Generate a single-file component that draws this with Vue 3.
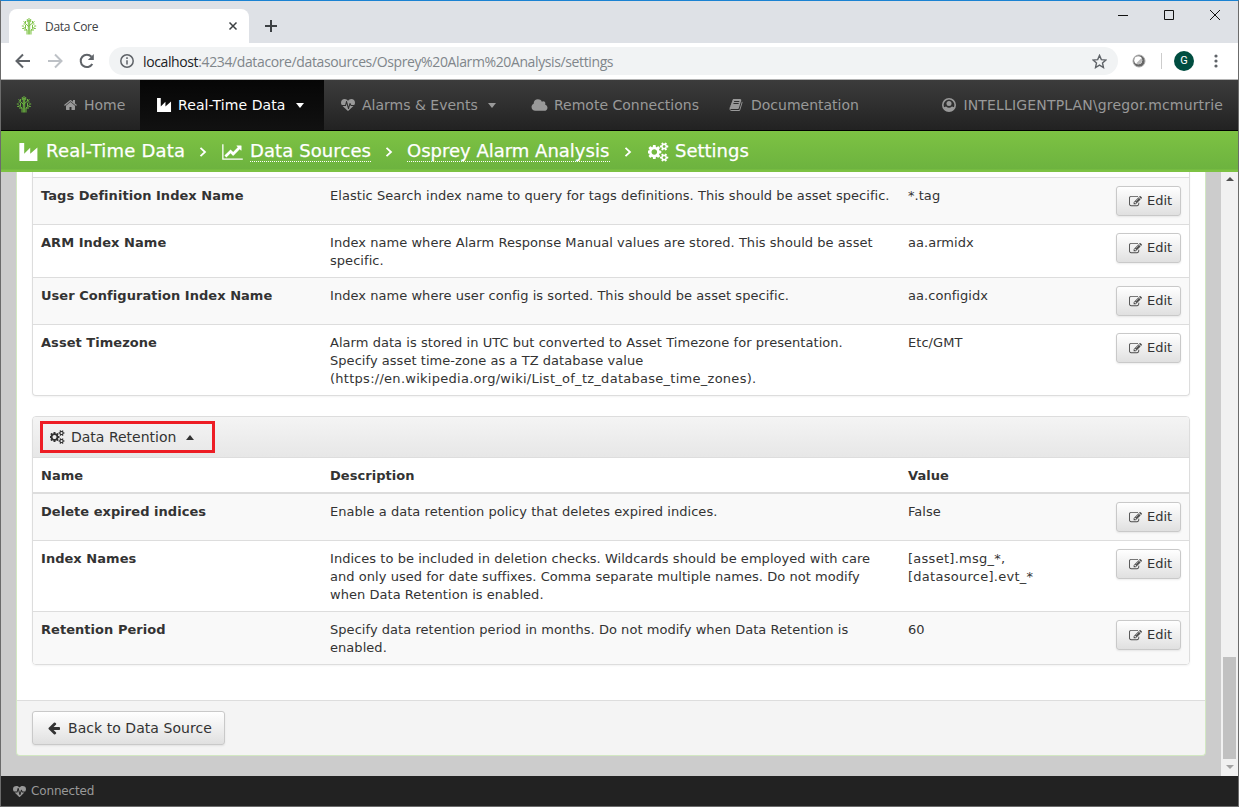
<script setup>
const icons = {
  home: { box: '0 0 1792 1792', d: 'M1408 992v480q0 26-19 45t-45 19h-384v-384h-256v384h-384q-26 0-45-19t-19-45v-480q0-1 .5-3t.5-3l575-474 575 474q1 2 1 6zm223-69l-62 74q-8 9-21 11h-3q-13 0-21-7l-692-577-692 577q-12 8-24 7-13-2-21-11l-62-74q-8-10-7-23.5t11-21.5l719-599q32-26 76-26t76 26l244 204v-195q0-14 9-23t23-9h192q14 0 23 9t9 23v408l219 182q10 8 11 21.5t-7 23.5z' },
  plant: { box: '0 0 16 15', d: 'M0 0h4v9l5-5v5l6-5.2V15H0z' },
  heart: { box: '0 0 1792 1792', d: 'M1280 1024h305q-5 6-10 10.5t-9 7.5l-3 4-623 600q-18 18-44 18t-44-18l-624-602q-5-2-21-20h369q22 0 39.5-13.5t22.5-34.5l70-281 190 667q6 20 23 33t39 13q21 0 38-13t23-33l146-485 56 112q18 35 57 35zm512-428q0 145-103 300h-369l-111-221q-8-17-25.5-27t-36.5-8q-45 5-56 46l-129 430-196-686q-6-20-23.5-33t-39.5-13-39 13.5-22 34.5l-116 464h-423q-103-155-103-300 0-220 127-344t351-124q62 0 126.5 21.5t120 58 95.5 68.5 76 68q36-36 76-68t95.5-68.5 120-58 126.5-21.5q224 0 351 124t127 344z' },
  cloud: { box: '0 0 2048 1792', d: 'M1984 1152q0 159-112.5 271.5t-271.5 112.5h-1088q-185 0-316.5-131.5t-131.5-316.5q0-132 71-241.5t187-163.5q-2-28-2-43 0-212 150-362t362-150q158 0 286.5 88t187.5 230q70-62 166-62 106 0 181 75t75 181q0 75-41 138 129 30 213 134.5t84 239.5z' },
  book: { box: '0 0 1792 1792', d: 'M1703 478q40 57 18 129l-275 906q-19 64-76.5 107.5t-122.5 43.5h-923q-77 0-148.5-53.5t-99.5-131.5q-24-67-2-127 0-4 3-27t4-37q1-8-3-21.5t-3-19.5q2-11 8-21t16.5-23.5 16.5-23.5q23-38 45-91.5t30-91.5q3-10 .5-30t-.5-28q3-11 17-28t17-23q21-36 42-92t25-90q1-9-2.5-32t.5-28q4-13 22-30.5t22-22.5q19-26 42.5-84.5t27.5-96.5q1-8-3-25.5t-2-26.5q2-8 9-18t18-23 17-21q8-12 16.5-30.5t15-35 16-36 19.5-32 26.5-23.5 36-11.5 47.5 5.5l-1 3q38-9 51-9h761q74 0 114 56t18 130l-274 906q-36 119-71.5 153.5t-128.5 34.5h-869q-27 0-38 15-11 16-1 43 24 70 144 70h923q29 0 56-15.5t35-41.5l300-987q7-22 5-57 38 15 59 43zm-1064 2q-4 13 2 22.5t20 9.5h608q13 0 25.5-9.5t16.5-22.5l21-64q4-13-2-22.5t-20-9.5h-608q-13 0-25.5 9.5t-16.5 22.5zm-83 256q-4 13 2 22.5t20 9.5h608q13 0 25.5-9.5t16.5-22.5l21-64q4-13-2-22.5t-20-9.5h-608q-13 0-25.5 9.5t-16.5 22.5z' },
  chart: { box: '0 0 2048 1792', d: 'M2048 1536v128h-2048v-1536h128v1408h1920zm-128-1248v435q0 21-19.5 29.5t-35.5-7.5l-121-121-633 633q-10 10-23 10t-23-10l-233-233-416 416-192-192 585-585q10-10 23-10t23 10l233 233 464-464-121-121q-16-16-7.5-35.5t29.5-19.5h435q14 0 23 9t9 23z' },
  cogs: { box: '0 0 1920 1792', d: 'M832 896q0-106-75-181t-181-75-181 75-75 181 75 181 181 75 181-75 75-181zm768 512q0-52-38-90t-90-38-90 38-38 90q0 53 37.5 90.5t90.5 37.5 90.5-37.5 37.5-90.5zm0-1024q0-52-38-90t-90-38-90 38-38 90q0 53 37.5 90.5t90.5 37.5 90.5-37.5 37.5-90.5zm-384 421v185q0 10-7 19.5t-16 10.5l-155 24q-11 35-32 76 34 48 90 115 7 11 7 20 0 12-7 19-23 30-82.5 89.5t-78.5 59.5q-11 0-21-7l-115-90q-37 19-77 31-11 108-23 155-7 24-30 24h-186q-11 0-20-7.5t-10-17.5l-23-153q-34-10-75-31l-118 89q-7 7-20 7-11 0-21-8-144-133-144-160 0-9 7-19 10-14 41-53t47-61q-23-44-35-82l-152-24q-10-1-17-9.5t-7-19.5v-185q0-10 7-19.5t16-10.5l155-24q11-35 32-76-34-48-90-115-7-11-7-20 0-12 7-20 22-30 82-89t79-59q11 0 21 7l115 90q34-18 77-32 11-108 23-154 7-24 30-24h186q11 0 20 7.5t10 17.5l23 153q34 10 75 31l118-89q8-7 20-7 11 0 21 8 144 133 144 160 0 8-7 19-12 16-42 54t-45 60q23 48 34 82l152 23q10 2 17 10.5t7 19.5zm640 533v140q0 16-149 31-12 27-30 52 51 113 51 138 0 4-4 7-122 71-124 71-8 0-46-47t-52-68q-20 2-30 2t-30-2q-14 21-52 68t-46 47q-2 0-124-71-4-3-4-7 0-25 51-138-18-25-30-52-149-15-149-31v-140q0-16 149-31 13-29 30-52-51-113-51-138 0-4 4-7 4-2 35-20t59-34 30-16q8 0 46 46.5t52 67.5q20-2 30-2t30 2q51-71 92-112l6-2q4 0 124 70 4 3 4 7 0 25-51 138 17 23 30 52 149 15 149 31zm0-1024v140q0 16-149 31-12 27-30 52 51 113 51 138 0 4-4 7-122 71-124 71-8 0-46-47t-52-68q-20 2-30 2t-30-2q-14 21-52 68t-46 47q-2 0-124-71-4-3-4-7 0-25 51-138-18-25-30-52-149-15-149-31v-140q0-16 149-31 13-29 30-52-51-113-51-138 0-4 4-7 4-2 35-20t59-34 30-16q8 0 46 46.5t52 67.5q20-2 30-2t30 2q51-71 92-112l6-2q4 0 124 70 4 3 4 7 0 25-51 138 17 23 30 52 149 15 149 31z' },
  edit: { box: '0 0 1792 1792', d: 'M888 1184l116-116-152-152-116 116v56h96v96h56zm440-720q-16-16-33 1l-350 350q-17 17-1 33t33-1l350-350q17-17 1-33zm80 594v190q0 119-84.5 203.5t-203.5 84.5h-832q-119 0-203.5-84.5t-84.5-203.5v-832q0-119 84.5-203.5t203.5-84.5h832q63 0 117 25 15 7 18 23 3 17-9 29l-49 49q-14 14-32 8-23-6-45-6h-832q-66 0-113 47t-47 113v832q0 66 47 113t113 47h832q66 0 113-47t47-113v-126q0-13 9-22l64-64q15-15 35-7t20 29zm-96-738l288 288-672 672h-288v-288zm444 132l-92 92-288-288 92-92q28-28 68-28t68 28l152 152q28 28 28 68t-28 68z' },
  back: { box: '0 0 1792 1792', d: 'M1664 896v128q0 53-32.5 90.5t-84.5 37.5h-704l293 294q38 36 38 90t-38 90l-75 76q-37 37-90 37-52 0-91-37l-651-652q-37-37-37-90 0-52 37-91l651-650q38-38 91-38 52 0 90 38l75 74q38 38 38 91t-38 91l-293 293h704q52 0 84.5 37.5t32.5 90.5z' },
}

const nav = [
  { id: 'home', icon: 'home', text: 'Home' },
  { id: 'realtime', icon: 'plant', text: 'Real-Time Data', active: true, caret: true },
  { id: 'alarms', icon: 'heart', text: 'Alarms & Events', caret: true },
  { id: 'remote', icon: 'cloud', text: 'Remote Connections' },
  { id: 'docs', icon: 'book', text: 'Documentation' },
]

const indexRows = [
  { name: 'Tags Definition Index Name', lines: ['Elastic Search index name to query for tags definitions. This should be asset specific.'], value: ['*.tag'] },
  { name: 'ARM Index Name', lines: ['Index name where Alarm Response Manual values are stored. This should be asset', 'specific.'], value: ['aa.armidx'] },
  { name: 'User Configuration Index Name', lines: ['Index name where user config is sorted. This should be asset specific.'], value: ['aa.configidx'] },
  { name: 'Asset Timezone', lines: ['Alarm data is stored in UTC but converted to Asset Timezone for presentation.', 'Specify asset time-zone as a TZ database value', '(https://en.wikipedia.org/wiki/List_of_tz_database_time_zones).'], value: ['Etc/GMT'] },
]

const retentionRows = [
  { name: 'Delete expired indices', lines: ['Enable a data retention policy that deletes expired indices.'], value: ['False'] },
  { name: 'Index Names', lines: ['Indices to be included in deletion checks. Wildcards should be employed with care', 'and only used for date suffixes. Comma separate multiple names. Do not modify', 'when Data Retention is enabled.'], value: ['[asset].msg_*,', '[datasource].evt_*'] },
  { name: 'Retention Period', lines: ['Specify data retention period in months. Do not modify when Data Retention is', 'enabled.'], value: ['60'] },
]

const isCode = (line) => line.includes('_')

const tree = 'M7.300 17.500V3M8.700 17.500V3M6 17.500v-4.500L2.500 10M10 17.500v-4.500l3.500-3M8 10L4.500 6.500V4M8 9l3.500-3V4M6 13H3M10 13h3M4.500 11V8M11.500 11V8M2.500 7h2M13.500 7h-2M6.300 5V2M9.700 5V2M.8 9h2M15.200 9h-2M1.200 11.500h2M14.800 11.500h-2M2.500 4.500L4.500 6M13.500 4.500L11.500 6M8 1v3'
</script>

<template>
  <div class="window">
    <header class="tabs">
      <div class="tab">
        <svg class="favicon" viewBox="0 0 16 18"><path :d="tree" /></svg>
        <span class="tab-title">Data Core</span>
        <svg class="tab-close" viewBox="0 0 8 8"><path d="M.5.5l7 7M7.500.5l-7 7" /></svg>
      </div>
      <svg class="new-tab" viewBox="0 0 12 12"><path d="M6 0v12M0 6h12" /></svg>
      <div class="controls">
        <svg viewBox="0 0 12 12"><path d="M1 6.500h10" /></svg>
        <svg viewBox="0 0 12 12"><path d="M1.500 1.500h9v9h-9z" /></svg>
        <svg viewBox="0 0 12 12"><path d="M1 1l10 10M11 1L1 11" /></svg>
      </div>
    </header>

    <div class="toolbar">
      <svg class="nav-arrow" viewBox="0 0 16 16"><path d="M15 8H2M8 1.500L1.500 8 8 14.500" /></svg>
      <svg class="nav-arrow faded" viewBox="0 0 16 16"><path d="M1 8h13M8 1.500L14.500 8 8 14.500" /></svg>
      <svg class="nav-arrow" viewBox="0 0 16 16"><path d="M13.300 11A6.200 6.200 0 1 1 12.500 3.700" /><path class="solid" d="M14.800 1v6H8.800z" /></svg>
      <div class="omnibox">
        <svg class="info" viewBox="0 0 14 14"><circle cx="7" cy="7" r="6.200" /><path d="M7 6.200v4.300M7 3.300v1.600" /></svg>
        <span class="url"><b>localhost</b>:4234/datacore/datasources/Osprey%20Alarm%20Analysis/settings</span>
        <svg class="star" viewBox="0 0 14 14"><path d="M7 1.300l1.700 3.900 4.300.4-3.200 2.800.9 4.200L7 10.400l-3.700 2.200.9-4.200L1 5.600l4.300-.4z" /></svg>
      </div>
      <svg class="ext" viewBox="0 0 14 14"><circle cx="7" cy="7" r="6" fill="#666" stroke="#aaa" /><circle cx="6.200" cy="6.200" r="4" fill="#fff" /><path d="M9.500 4a4 4 0 0 1-5.500 5.500z" fill="#bbb" /></svg>
      <i class="divider"></i>
      <span class="avatar">G</span>
      <svg class="dots" viewBox="0 0 4 14"><circle cx="2" cy="2" r="1.600" /><circle cx="2" cy="7" r="1.600" /><circle cx="2" cy="12" r="1.600" /></svg>
    </div>

    <nav class="navbar">
      <svg class="brand" viewBox="0 0 16 18"><path :d="tree" /></svg>
      <a v-for="item in nav" :key="item.id" class="nav-item" :class="[item.id, { active: item.active }]">
        <svg class="nav-icon" :viewBox="icons[item.icon].box"><path :d="icons[item.icon].d" /></svg>
        <span class="label">{{ item.text }}</span>
        <i v-if="item.caret" class="caret"></i>
      </a>
      <a class="nav-item user">
        <svg class="nav-icon" viewBox="0 0 14 14"><circle cx="7" cy="7" r="6.200" fill="none" stroke="#999" stroke-width="1.600" /><circle cx="7" cy="5.500" r="2.500" /><path d="M1.500 9.500L4 8.600q3 2.400 6 0l2.500.9L10 13H4z" /></svg>
        <span class="label">INTELLIGENTPLAN\gregor.mcmurtrie</span>
      </a>
    </nav>

    <div class="crumbs">
      <svg class="c-plant" :viewBox="icons.plant.box"><path :d="icons.plant.d" /></svg>
      <span class="crumb c1">Real-Time Data</span>
      <svg class="sep" viewBox="0 0 8 10"><path d="M1.500.8L6 5 1.500 9.200" /></svg>
      <svg class="c-chart" :viewBox="icons.chart.box"><path :d="icons.chart.d" /></svg>
      <span class="crumb c2 link">Data Sources</span>
      <svg class="sep" viewBox="0 0 8 10"><path d="M1.500.8L6 5 1.500 9.200" /></svg>
      <span class="crumb c3 link">Osprey Alarm Analysis</span>
      <svg class="sep" viewBox="0 0 8 10"><path d="M1.500.8L6 5 1.500 9.200" /></svg>
      <svg class="c-cogs" :viewBox="icons.cogs.box"><path :d="icons.cogs.d" /></svg>
      <span class="crumb c4">Settings</span>
    </div>

    <div class="viewport">
      <main class="page">
        <div class="page-body">
          <section class="card continued">
            <div v-for="row in indexRows" :key="row.name" class="row">
              <div class="cell name"><span>{{ row.name }}</span></div>
              <div class="cell"><span v-for="line in row.lines" :key="line" class="line" :class="{ code: isCode(line) }">{{ line }}</span></div>
              <div class="cell"><span v-for="line in row.value" :key="line" class="line" :class="{ code: isCode(line) }">{{ line }}</span></div>
              <button class="btn edit"><svg :viewBox="icons.edit.box"><path :d="icons.edit.d" /></svg>Edit</button>
            </div>
          </section>
          <section class="card retention">
            <div class="card-head">
              <div class="highlight">
                <svg :viewBox="icons.cogs.box"><path :d="icons.cogs.d" /></svg>
                <span>Data Retention</span>
                <i class="caret up"></i>
              </div>
            </div>
            <div class="row head">
              <div class="cell name"><span>Name</span></div>
              <div class="cell name"><span>Description</span></div>
              <div class="cell name"><span>Value</span></div>
            </div>
            <div v-for="row in retentionRows" :key="row.name" class="row">
              <div class="cell name"><span>{{ row.name }}</span></div>
              <div class="cell"><span v-for="line in row.lines" :key="line" class="line" :class="{ code: isCode(line) }">{{ line }}</span></div>
              <div class="cell"><span v-for="line in row.value" :key="line" class="line" :class="{ code: isCode(line) }">{{ line }}</span></div>
              <button class="btn edit"><svg :viewBox="icons.edit.box"><path :d="icons.edit.d" /></svg>Edit</button>
            </div>
          </section>
        </div>
        <footer class="page-foot">
          <button class="btn back"><svg :viewBox="icons.back.box"><path :d="icons.back.d" /></svg>Back to Data Source</button>
        </footer>
      </main>
      <div class="scrollbar">
        <i class="caret up"></i>
        <i class="thumb"></i>
        <i class="caret down"></i>
      </div>
    </div>

    <footer class="status">
      <svg :viewBox="icons.heart.box"><path :d="icons.heart.d" /></svg>
      <span>Connected</span>
    </footer>
  </div>
</template>

<style>
body { margin: 0; overflow: hidden; }
</style>

<style scoped>
* { box-sizing: border-box; }
svg { display: block; flex: none; }
.window {
  width: 1239px; height: 807px; display: flex; flex-direction: column;
  border: 1px solid #6b6b6b; border-top-color: #1a82d2; background: #fff;
  font: 13px/18px Verdana, "DejaVu Sans", sans-serif; color: #333; overflow: hidden; white-space: nowrap;
}
.tabs { height: 42px; flex: none; display: flex; background: #dee1e6; padding: 8px 0 0 8px; }
.tab { width: 240px; height: 34px; display: flex; align-items: center; background: #fff; border-radius: 8px 8px 0 0; padding: 0 12px; }
.favicon, .brand { width: 16px; height: 18px; fill: none; stroke: #7cc243; stroke-width: 1; }
.tab-title { margin-left: 8px; font: 12px "Open Sans", sans-serif; letter-spacing: -.3px; color: #3c4043; flex: 1; }
.tab-close { width: 8px; height: 8px; fill: none; stroke: #3c4043; stroke-width: 1.5; margin-right: 0; overflow: visible; }
.new-tab { width: 12px; height: 12px; margin: 11px 0 0 16px; fill: none; stroke: #3c4043; stroke-width: 2; }
.controls { margin-left: auto; display: flex; gap: 34px; padding-right: 17px; }
.controls svg { width: 12px; height: 12px; fill: none; stroke: #111; stroke-width: 1; }
.toolbar { height: 37px; flex: none; display: flex; align-items: center; background: #fff; border-bottom: 1px solid #b4b4b4; padding: 0 20px 0 14px; }
.nav-arrow { width: 16px; height: 16px; margin-right: 16px; fill: none; stroke: #5f6368; stroke-width: 2; }
.nav-arrow.faded { stroke: #bdc1c6; }
.nav-arrow .solid { fill: #5f6368; stroke: none; }
.omnibox { width: 1009px; height: 28px; margin-left: -2px; display: flex; align-items: center; background: #f1f3f4; border-radius: 14px; padding: 0 11px 0 11px; }
.info { width: 14px; height: 14px; fill: none; stroke: #5f6368; stroke-width: 1.5; }
.url { margin-left: 9px; font: 14px "Open Sans", sans-serif; letter-spacing: -.38px; color: #80868b; flex: 1; }
.url b { font-weight: 400; color: #202124; }
.star { width: 15px; height: 15px; fill: none; stroke: #5f6368; stroke-width: 1.3; }
.ext { width: 14px; height: 14px; margin-left: 14px; }
.divider { width: 1px; height: 16px; background: #ccc; margin-left: 15px; }
.avatar { width: 20px; height: 20px; border-radius: 50%; background: #004d40; color: #fff; font: 11px/20px Roboto, sans-serif; text-align: center; margin-left: 12px; }
.dots { width: 4px; height: 14px; margin-left: auto; fill: #5f6368; }
.navbar { height: 51px; flex: none; display: flex; background: linear-gradient(#3c3c3c, #222); border-bottom: 1px solid #000; color: #999; font-size: 14px; }
.brand { margin: 15px 16px 0 15px; stroke: #6ab33f; }
.nav-item { display: flex; align-items: center; padding: 0 16px; height: 50px; }
.nav-icon { width: 14px; height: 14px; fill: currentColor; }
.label { margin-left: 6px; }
.home { width: 92px; }
.realtime { width: 184px; padding-left: 17px; }
.realtime .nav-icon { width: 15px; height: 14px; }
.realtime .label { letter-spacing: .1px; }
.alarms { width: 191px; padding-left: 17px; }
.alarms .label { margin-left: 7px; }
.remote { width: 198px; }
.remote .nav-icon { width: 17px; height: 15px; }
.remote .label { margin-left: 6px; }
.docs .label { margin-left: 8px; }
.user { margin-left: auto; padding: 0 15px; }
.user .label { margin-left: 7px; letter-spacing: .16px; }
.active { background: linear-gradient(#060606, #111); color: #fff; }
.caret { border: 4.5px solid transparent; border-bottom: 0; border-top: 5px solid currentColor; margin-left: 10px; }
.caret.up { border-top: 0; border-bottom: 5px solid currentColor; }
.crumbs { height: 41px; flex: none; display: flex; align-items: center; padding-left: 18px; background: linear-gradient(#7dc243, #6db33f 38px, #7dc243 39px); color: #fff; font-size: 18px; line-height: 20px; }
.crumbs svg { fill: #fff; }
.crumb { height: 21px; margin-bottom: 1px; border-bottom: 1px solid transparent; -webkit-text-stroke: .25px #fff; }
.crumb.link { border-bottom: 1px dotted #fff; }
.crumbs .sep { width: 8px; height: 10px; fill: none; stroke: #fff; stroke-width: 1.8; margin: 0 14px; }
.c-plant { width: 20px; height: 18px; }
.c-chart { width: 21px; height: 18px; margin-left: 1px; }
.c-cogs { width: 21px; height: 20px; margin-left: 2px; }
.c1 { width: 139px; margin-left: 7px; letter-spacing: .2px; }
.c2 { width: 121px; margin-left: 7px; letter-spacing: .1px; }
.c3 { width: 203px; }
.c4 { margin-left: 6px; }
.viewport { height: 604px; flex: none; display: flex; background: #ccc; }
.page { width: 1190px; height: 584px; margin-left: 15px; border: 1px solid #d2e8c2; border-top: 0; border-radius: 0 0 4px 4px; display: flex; flex-direction: column; overflow: hidden; background: #f4f4f4; }
.page-body { height: 528px; flex: none; background: #fff; padding: 0 15px; }
.card { border: 1px solid #ddd; border-radius: 4px; box-shadow: 0 1px 2px rgba(0, 0, 0, .05); overflow: hidden; }
.continued { border-top: 0; border-radius: 0 0 4px 4px; padding-top: 5px; }
.retention { margin-top: 20px; }
.card-head { height: 41px; border-bottom: 1px solid #ddd; background: linear-gradient(#f4f4f4, #e7e7e7); padding: 4px 7px; }
.highlight { width: 175px; height: 32px; border: 3px solid #ed1c24; display: flex; align-items: center; padding-left: 7px; font-size: 14px; color: #333; }
.highlight svg { width: 15px; height: 14px; fill: #333; margin-right: 6px; }
.row { min-height: 47px; display: grid; grid-template-columns: 289px 578px 1fr auto; border-top: 1px solid #ddd; padding-bottom: 7px; }
.row:nth-child(odd) { background: #f9f9f9; }
.row.head { min-height: 35px; height: 35px; border-top: 0; border-bottom: 1px solid #ddd; background: #fff; }
.cell { padding: 9px 8px 0; letter-spacing: .045px; }
.name { font-weight: 700; letter-spacing: .04px; }
.line { display: block; }
.line.code { letter-spacing: .27px; }
.btn { display: flex; align-items: center; border: 1px solid #c9c9c9; border-radius: 3px; background: linear-gradient(#fff, #e0e0e0); box-shadow: 0 1px 2px rgba(0, 0, 0, .08); font: inherit; color: #333; padding: 0; white-space: nowrap; }
.btn svg { fill: #333; }
.edit { width: 65px; height: 30px; margin: 8px 8px 0 0; padding-left: 12px; }
.edit svg { width: 13px; height: 13px; margin-right: 5px; opacity: .85; }
.page-foot { height: 55px; border-top: 1px solid #ddd; padding: 10px 15px; }
.back { width: 193px; height: 34px; font-size: 14px; padding-left: 15px; letter-spacing: .05px; }
.back svg { width: 14px; height: 14px; margin: 0 7px 0 -1px; }
.scrollbar { width: 17px; margin-left: auto; background: #f1f1f1; display: flex; flex-direction: column; align-items: center; color: #505050; }
.scrollbar .caret { margin: 5px 0 0; border-width: 4px; border-top-width: 0; }
.thumb { width: 13px; height: 102px; margin-top: 476px; background: #c1c1c1; }
.scrollbar .caret.down { margin-top: 6px; border-top-width: 4px; border-bottom-width: 0; color: #a3a3a3; }
.status { height: 30px; flex: none; display: flex; align-items: center; background: #222; color: #999; padding-left: 12px; font-size: 12px; letter-spacing: -.15px; }
.status svg { width: 13px; height: 13px; fill: #999; margin-right: 5px; }
</style>
